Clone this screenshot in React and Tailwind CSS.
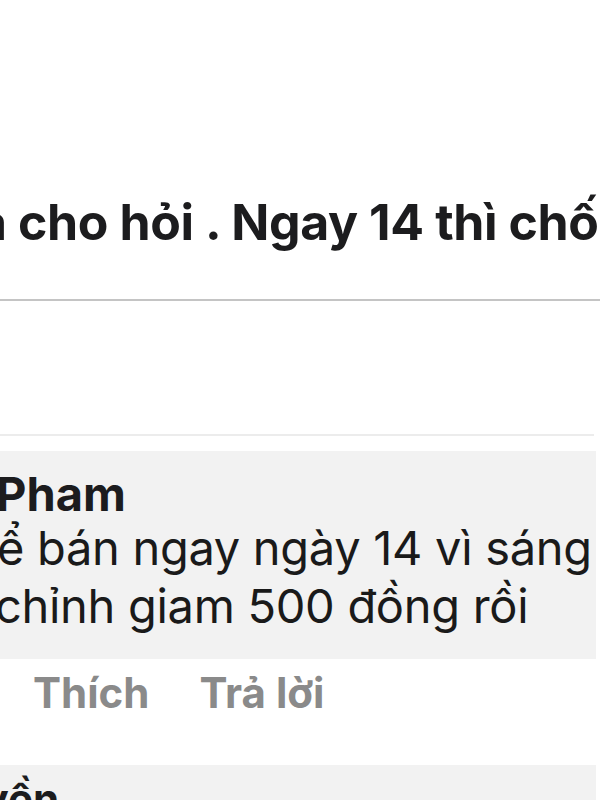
import React from 'react';

const font = { fontFamily: 'Inter, "Noto Sans", sans-serif' };

const App = () => {
  return (
    <div className="w-[600px] h-[800px] overflow-hidden bg-white text-[#1c1c1e]" style={font}>
      {/* Post text */}
      <div className="h-[299px] pt-[190px] overflow-hidden">
        <p className="whitespace-nowrap text-[50px] leading-[64px] font-bold tracking-[-0.4px] -ml-[22px]">
          a cho hỏi . Ngay 14 thì chối hết rồi
        </p>
      </div>
      <div className="h-[2px] bg-[#c4c4c4]" />

      <div className="h-[133px]" />
      <div className="h-[2px] bg-[#ececec] mr-[6px]" />
      <div className="h-[15px]" />

      {/* Comment */}
      <div className="mr-[4px] bg-[#f2f2f2] h-[208px] overflow-hidden pt-[18px]">
        <p className="whitespace-nowrap text-[47px] leading-[50px] font-bold -ml-[4px]">Pham</p>
        <p className="whitespace-nowrap text-[47px] leading-[58px] tracking-[-0.3px] text-[#1a1a1a] -ml-[3px]">ể bán ngay ngày 14 vì sáng</p>
        <p className="whitespace-nowrap text-[47px] leading-[58px] tracking-[-0.3px] text-[#1a1a1a] -ml-[5px]">chỉnh giam 500 đồng rồi</p>
      </div>

      {/* Actions */}
      <div className="flex gap-[50px] pl-[33px] pt-[8px] h-[106px] text-[42px] leading-[52px] font-bold text-[#8a8a8a]">
        <span>Thích</span>
        <span>Trả lời</span>
      </div>

      {/* Next comment */}
      <div className="mr-[4px] bg-[#f2f2f2] h-[40px] overflow-hidden pt-[10px]">
        <p className="whitespace-nowrap text-[42px] leading-[48px] font-bold -ml-[74px]">Huyền</p>
      </div>
    </div>
  );
};

export default App;
